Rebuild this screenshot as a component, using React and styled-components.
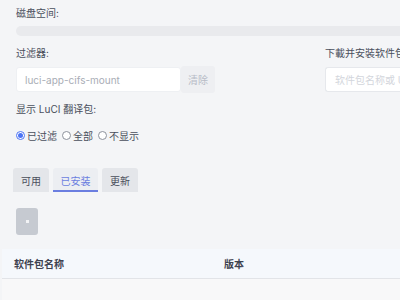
import React from "react";
import styled, { createGlobalStyle } from "styled-components";

const Global = createGlobalStyle`
  html, body { margin: 0; padding: 0; background: #f4f5f7; overflow: hidden; }
  body { font-family: "Inter", "Noto Sans CJK SC", sans-serif; width: 400px; height: 300px; }
  * { box-sizing: border-box; }
`;

const Page = styled.div`
  width: 400px;
  height: 300px;
  overflow: hidden;
  padding-top: 7px;
`;

const Section = styled.div`
  padding: 0 0 0 16px;
`;

const Label = styled.div`
  font-size: 10px;
  line-height: 12px;
  color: #4a4f5c;
  margin-top: ${(p) => p.$mt || "0"};
`;

const Bar = styled.div`
  margin-top: 7px;
  height: 10px;
  border-radius: 5px 0 0 5px;
  background: #e9eaed;
`;

const Row = styled.div`
  display: flex;
  margin-top: 11px;
`;

const Col = styled.div`
  display: flex;
  flex-direction: column;
  width: ${(p) => p.$w || "auto"};
  flex: ${(p) => (p.$grow ? 1 : "none")};
`;

const InputGroup = styled.div`
  display: flex;
  margin-top: 7px;
  height: 27px;
  align-items: stretch;
`;

const Input = styled.div`
  width: ${(p) => p.$w || "165px"};
  flex: ${(p) => (p.$grow ? 1 : "none")};
  background: #fff;
  border: 1px solid ${(p) => (p.$border ? "#e6e8ec" : "#eef0f3")};
  border-right: ${(p) => (p.$grow ? "none" : "")};
  border-radius: ${(p) => (p.$grow ? "3px 0 0 3px" : "3px")};
  margin-top: 1px;
  height: 25px;
  display: flex;
  align-items: center;
  padding-left: ${(p) => p.$pl || "8px"};
  font-size: 10px;
  color: ${(p) => p.$c || "#a9adb6"};
  white-space: nowrap;
  overflow: hidden;
`;

const ClearBtn = styled.div`
  width: 34px;
  background: #eeeff2;
  border-radius: 3px;
  display: flex;
  align-items: center;
  justify-content: center;
  font-size: 10px;
  color: #b7bcc7;
`;

const Radios = styled.div`
  display: flex;
  align-items: center;
  margin-top: 13px;
  gap: 5px;
`;

const RadioItem = styled.label`
  display: flex;
  align-items: center;
  gap: 2px;
  font-size: 10px;
  color: #4a4f5c;
`;

const Dot = styled.span`
  width: 9px;
  height: 9px;
  border-radius: 50%;
  border: 1px solid ${(p) => (p.$on ? "#4d74f5" : "#8d929c")};
  background: #fff;
  display: flex;
  align-items: center;
  justify-content: center;
  &::after {
    content: "";
    width: 5px;
    height: 5px;
    border-radius: 50%;
    background: ${(p) => (p.$on ? "#4d74f5" : "transparent")};
  }
`;

const Tabs = styled.div`
  display: flex;
  gap: 4px;
  margin-top: 25px;
  padding-left: 13px;
`;

const Tab = styled.div`
  width: ${(p) => p.$w};
  height: 24px;
  border-radius: 3px 3px 0 0;
  background: ${(p) => (p.$active ? "#eceef2" : "#e4e6ea")};
  color: ${(p) => (p.$active ? "#6b7ee0" : "#4a4f5c")};
  font-size: 10px;
  display: flex;
  align-items: center;
  justify-content: center;
  box-shadow: ${(p) => (p.$active ? "inset 0 -2px 0 #6b7ee0" : "none")};
`;

const PageBtn = styled.div`
  margin: 16px 0 0 16px;
  width: 22px;
  height: 27px;
  border-radius: 3px;
  background: #c6cad1;
  display: flex;
  align-items: center;
  justify-content: center;
  &::after {
    content: "";
    width: 3px;
    height: 3px;
    background: #f2f3f5;
  }
`;

const Table = styled.div`
  margin-top: 14px;
  margin-left: 2px;
`;

const Head = styled.div`
  display: flex;
  height: 30px;
  align-items: center;
  background: #f5f8fc;
  border-bottom: 1px solid #e2e4e8;
  font-size: 10px;
  font-weight: 600;
  color: #3e4250;
`;

const Th = styled.div`
  width: ${(p) => p.$w};
  padding-left: 12px;
`;

const Body = styled.div`
  height: 40px;
  background: #f8f8f9;
`;

export default function App() {
  return (
    <Page>
      <Global />
      <Section>
        <Label>磁盘空间:</Label>
        <Bar />
        <Row>
          <Col $w="309px">
            <Label>过滤器:</Label>
            <InputGroup>
              <Input>luci-app-cifs-mount</Input>
              <ClearBtn>清除</ClearBtn>
            </InputGroup>
          </Col>
          <Col $grow>
            <Label>下載并安裝软件包:</Label>
            <InputGroup>
              <Input $grow $border $pl="9px" $c="#d3d6dc">软件包名称或 URL...</Input>
            </InputGroup>
          </Col>
        </Row>
        <Label $mt="10px">显示 LuCI 翻译包:</Label>
        <Radios>
          <RadioItem><Dot $on />已过滤</RadioItem>
          <RadioItem><Dot />全部</RadioItem>
          <RadioItem><Dot />不显示</RadioItem>
        </Radios>
      </Section>
      <Tabs>
        <Tab $w="36px">可用</Tab>
        <Tab $w="45px" $active>已安装</Tab>
        <Tab $w="36px">更新</Tab>
      </Tabs>
      <PageBtn />
      <Table>
        <Head>
          <Th $w="210px">软件包名称</Th>
          <Th $w="150px">版本</Th>
        </Head>
        <Body />
      </Table>
    </Page>
  );
}
